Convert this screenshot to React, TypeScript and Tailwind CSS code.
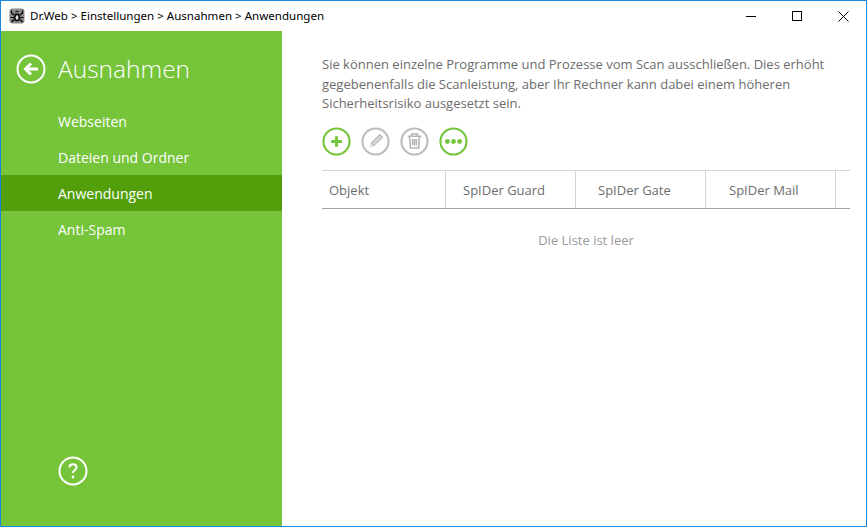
const menu = ["Webseiten", "Dateien und Ordner", "Anwendungen", "Anti-Spam"];
const columns = [
  { label: "Objekt", width: "w-[124px] pl-[7px]" },
  { label: "SpIDer Guard", width: "w-[130px] pl-[17px]" },
  { label: "SpIDer Gate", width: "w-[130px] pl-[22px]" },
  { label: "SpIDer Mail", width: "w-[130px] pl-[23px]" },
];

function CircleButton({ color, children }: { color: string; children: React.ReactNode }) {
  return (
    <svg width="29" height="29" viewBox="0 0 30 30" fill="none" className="shrink-0">
      <circle cx="15" cy="15" r="13.5" stroke={color} strokeWidth="2.2" />
      {children}
    </svg>
  );
}

function AppIcon() {
  return (
    <svg width="16" height="16" viewBox="0 0 16 16" className="shrink-0">
      <rect x="0.5" y="0.5" width="15" height="15" rx="3" fill="#8a8a8a" />
      <path
        d="M5 7 2.5 5V2.5M5 9.5H1.5M5 11.5l-2.5 2.5M11 7l2.5-2V2.5M11 9.5h3.5M11 11.5l2.5 2.5"
        stroke="#000"
        strokeWidth="1.2"
        fill="none"
      />
      <ellipse cx="8" cy="9.5" rx="3.2" ry="4" fill="#111" />
      <circle cx="8" cy="5" r="2.2" fill="#111" />
      <ellipse cx="8" cy="9.5" rx="1.4" ry="2.2" fill="#ddd" />
      <circle cx="7" cy="4.8" r="0.7" fill="#fff" />
      <circle cx="9" cy="4.8" r="0.7" fill="#fff" />
    </svg>
  );
}

export default function App() {
  return (
    <div className="flex h-[527px] w-[867px] flex-col overflow-hidden border border-[#1a86d9] bg-white font-['Open_Sans',sans-serif]">
      <header className="flex h-[30px] shrink-0 items-center pl-[8px]">
        <AppIcon />
        <span className="ml-[5px] font-['Noto_Sans',sans-serif] text-[11.55px] text-black">
          Dr.Web &gt; Einstellungen &gt; Ausnahmen &gt; Anwendungen
        </span>
        <div className="ml-auto flex items-center">
          <div className="flex w-[46px] justify-center">
            <div className="h-px w-[10px] bg-black" />
          </div>
          <div className="flex w-[46px] justify-center">
            <div className="h-[10px] w-[10px] border border-black" />
          </div>
          <div className="flex w-[46px] justify-center">
            <svg width="11" height="11" viewBox="0 0 11 11">
              <path d="M.5.5l10 10M10.5.5l-10 10" stroke="#000" strokeWidth="1" />
            </svg>
          </div>
        </div>
      </header>

      <div className="flex min-h-0 flex-1">
        <aside className="flex w-[281px] shrink-0 flex-col bg-[#75c43a] text-white">
          <div className="flex h-[71px] items-center pl-[15px] pt-[5px]">
            <svg width="30" height="30" viewBox="0 0 30 30" fill="none">
              <circle cx="15" cy="15" r="13.5" stroke="#fff" strokeWidth="2" />
              <path
                d="M22 15H10M15 9.5 9.5 15l5.5 5.5"
                stroke="#fff"
                strokeWidth="3"
              />
            </svg>
            <h1 className="ml-[12px] text-[24.5px] font-light leading-none">Ausnahmen</h1>
          </div>
          <nav className="mt-[1px] flex flex-col">
            {menu.map((item) => (
              <div
                key={item}
                className={`flex h-[36px] items-center pl-[57px] text-[14px] ${
                  item === "Anwendungen" ? "bg-[#529f0b]" : ""
                }`}
              >
                {item}
              </div>
            ))}
          </nav>
          <div className="mt-auto pb-[40px] pl-[57px]">
            <svg width="30" height="30" viewBox="0 0 30 30" fill="none">
              <circle cx="15" cy="15" r="13.5" stroke="#fff" strokeWidth="2" />
              <path
                d="M11.5 11.5c0-2 1.5-3.2 3.5-3.2s3.5 1.2 3.5 3.1c0 2.8-3.5 2.7-3.5 5.6"
                stroke="#fff"
                strokeWidth="2"
              />
              <circle cx="15" cy="21" r="1.4" fill="#fff" />
            </svg>
          </div>
        </aside>

        <main className="min-w-0 flex-1 pl-[40px] pr-[15px] pt-[24px]">
          <p className="w-[520px] text-[13px] leading-[19.5px] text-[#6d6d6d]">
            Sie können einzelne Programme und Prozesse vom Scan ausschließen. Dies erhöht
            gegebenenfalls die Scanleistung, aber Ihr Rechner kann dabei einem höheren
            Sicherheitsrisiko ausgesetzt sein.
          </p>

          <div className="mt-[13px] flex gap-[10px]">
            <CircleButton color="#75c43a">
              <path d="M15 9.5v11M9.5 15h11" stroke="#75c43a" strokeWidth="3" />
            </CircleButton>
            <CircleButton color="#bdbdbd">
              <path
                d="M19.5 8l2.5 2.5-9 9-2.5-2.5z"
                stroke="#bdbdbd"
                strokeWidth="1.5"
                fill="#dcdcdc"
                strokeLinejoin="round"
              />
              <path d="M9.5 18.5l2 2-3 1z" fill="#d0d0d0" />
            </CircleButton>
            <CircleButton color="#bdbdbd">
              <path
                d="M8 9.5h14M12 9.5V7.3h6v2.2M9.8 9.5l1 12.2h8.4l1-12.2M13 12.5v6.5M15 12.5v6.5M17 12.5v6.5"
                stroke="#b5b5b5"
                strokeWidth="1.6"
              />
            </CircleButton>
            <CircleButton color="#75c43a">
              <circle cx="8.7" cy="15" r="2.5" fill="#75c43a" />
              <circle cx="15" cy="15" r="2.5" fill="#75c43a" />
              <circle cx="21.3" cy="15" r="2.5" fill="#75c43a" />
            </CircleButton>
          </div>

          <div className="mt-[14px] flex h-[39px] w-[528px] border-b border-t border-b-[#a5a5a5] border-t-[#d6d6d6]">
            {columns.map((c) => (
              <div
                key={c.label}
                className={`flex items-center border-r border-[#d6d6d6] pt-[3px] text-[13px] text-[#6d6d6d] ${c.width}`}
              >
                {c.label}
              </div>
            ))}
          </div>

          <p className="mt-[22px] w-[528px] text-center text-[13px] text-[#9a9a9a]">
            Die Liste ist leer
          </p>
        </main>
      </div>
    </div>
  );
}
